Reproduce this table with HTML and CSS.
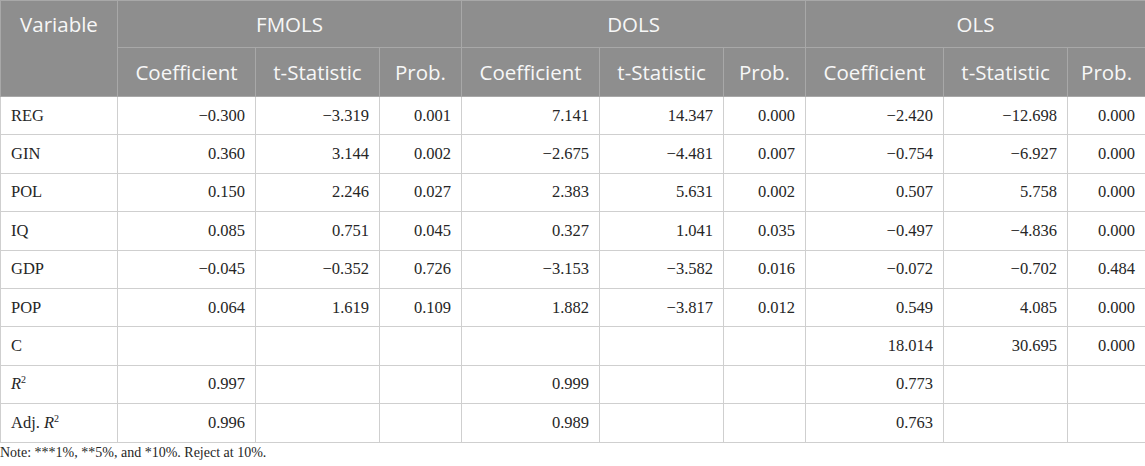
FILE: index.html
```html
<!DOCTYPE html>
<html>
<head>
<meta charset="utf-8">
<link rel="stylesheet" href="styles.css">
</head>
<body>
<table class="results">
  <colgroup>
    <col class="c-var">
    <col class="c-coef"><col class="c-t"><col class="c-p">
    <col class="c-coef"><col class="c-t"><col class="c-p">
    <col class="c-coef"><col class="c-t"><col class="c-p2">
  </colgroup>
  <thead>
    <tr class="h1">
      <th rowspan="2" class="var-head">Variable</th>
      <th colspan="3">FMOLS</th>
      <th colspan="3">DOLS</th>
      <th colspan="3">OLS</th>
    </tr>
    <tr class="h2">
      <th>Coefficient</th><th>t-Statistic</th><th>Prob.</th>
      <th>Coefficient</th><th>t-Statistic</th><th>Prob.</th>
      <th>Coefficient</th><th>t-Statistic</th><th>Prob.</th>
    </tr>
  </thead>
  <tbody>
    <tr><td>REG</td><td>−0.300</td><td>−3.319</td><td>0.001</td><td>7.141</td><td>14.347</td><td>0.000</td><td>−2.420</td><td>−12.698</td><td>0.000</td></tr>
    <tr><td>GIN</td><td>0.360</td><td>3.144</td><td>0.002</td><td>−2.675</td><td>−4.481</td><td>0.007</td><td>−0.754</td><td>−6.927</td><td>0.000</td></tr>
    <tr><td>POL</td><td>0.150</td><td>2.246</td><td>0.027</td><td>2.383</td><td>5.631</td><td>0.002</td><td>0.507</td><td>5.758</td><td>0.000</td></tr>
    <tr><td>IQ</td><td>0.085</td><td>0.751</td><td>0.045</td><td>0.327</td><td>1.041</td><td>0.035</td><td>−0.497</td><td>−4.836</td><td>0.000</td></tr>
    <tr><td>GDP</td><td>−0.045</td><td>−0.352</td><td>0.726</td><td>−3.153</td><td>−3.582</td><td>0.016</td><td>−0.072</td><td>−0.702</td><td>0.484</td></tr>
    <tr><td>POP</td><td>0.064</td><td>1.619</td><td>0.109</td><td>1.882</td><td>−3.817</td><td>0.012</td><td>0.549</td><td>4.085</td><td>0.000</td></tr>
    <tr><td>C</td><td></td><td></td><td></td><td></td><td></td><td></td><td>18.014</td><td>30.695</td><td>0.000</td></tr>
    <tr><td><i>R</i><sup>2</sup></td><td>0.997</td><td></td><td></td><td>0.999</td><td></td><td></td><td>0.773</td><td></td><td></td></tr>
    <tr><td>Adj. <i>R</i><sup>2</sup></td><td>0.996</td><td></td><td></td><td>0.989</td><td></td><td></td><td>0.763</td><td></td><td></td></tr>
  </tbody>
</table>
<p class="note">Note: ***1%, **5%, and *10%. Reject at 10%.</p>
</body>
</html>
```

FILE: styles.css
```css
html, body {
  margin: 0;
  padding: 0;
  background: #ffffff;
}

.results {
  border-collapse: collapse;
  table-layout: fixed;
  width: 1145px;
  font-family: "Liberation Serif", "Times New Roman", serif;
  font-size: 16.5px;
  color: #262626;
}

.c-var { width: 117px; }
.c-coef { width: 138px; }
.c-t { width: 124px; }
.c-p { width: 82px; }
.c-p2 { width: 78px; }

.results th {
  background: #8e8e8e;
  color: #f7f7f7;
  font-family: "Open Sans", "Noto Sans", sans-serif;
  font-weight: 400;
  font-size: 20.5px;
  text-align: center;
  border: 1px solid #a8a8a8;
  padding: 0 6px;
  white-space: nowrap;
}

.results tr.h1 th { height: 46px; }
.results tr.h2 th { height: 48px; }

.results th.var-head {
  vertical-align: top;
  padding-top: 9px;
}

.results td {
  border: 1px solid #cfcfcf;
  height: 37.4px;
  padding: 0 10px;
  text-align: right;
  white-space: nowrap;
}

.results td:first-child {
  text-align: left;
}

.results sup {
  font-size: 10px;
  vertical-align: 6px;
  line-height: 0;
}

.note {
  margin: 2px 0 0 0;
  font-family: "Liberation Serif", "Times New Roman", serif;
  font-size: 14px;
  color: #262626;
}
```
